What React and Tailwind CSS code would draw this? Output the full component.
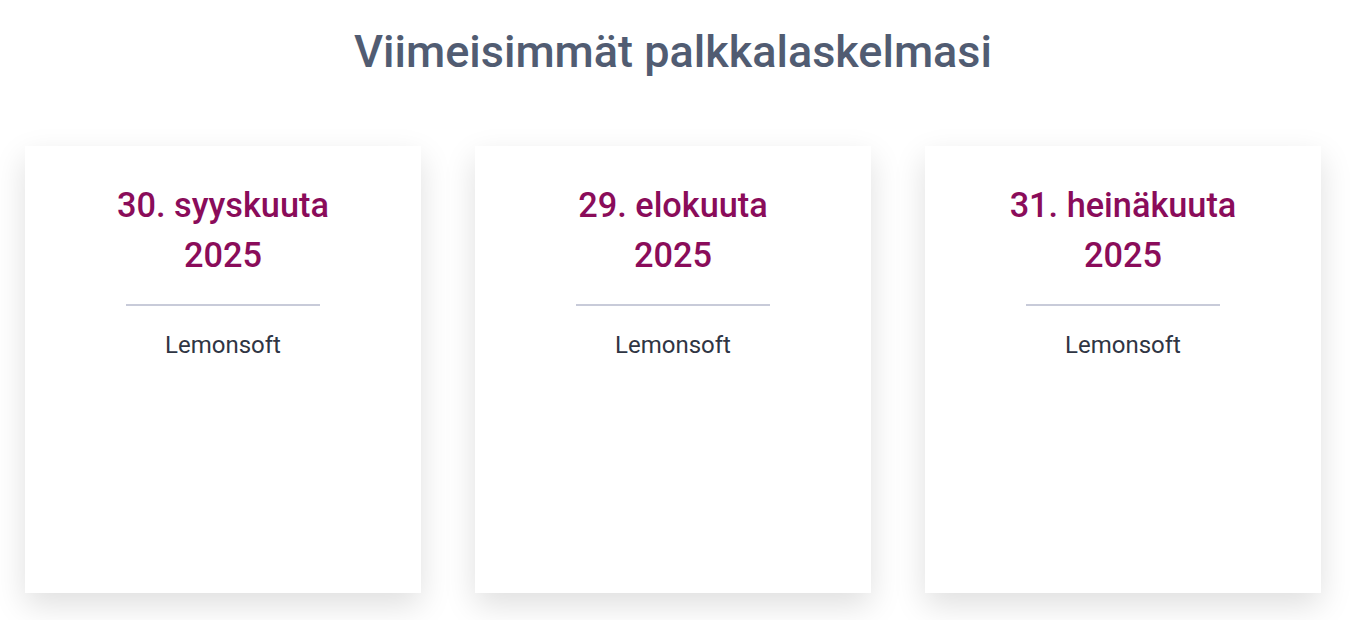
import React from 'react';

const payslips = [
  { day: '30. syyskuuta', year: '2025', company: 'Lemonsoft' },
  { day: '29. elokuuta', year: '2025', company: 'Lemonsoft' },
  { day: '31. heinäkuuta', year: '2025', company: 'Lemonsoft' },
];

const PayslipCard = ({ slip }) => (
  <div className="w-[396px] h-[447px] bg-white shadow-[0_12px_30px_rgba(0,0,0,0.13)] flex flex-col items-center pt-[34px]">
    <h2 className="text-[34.3px] leading-[50px] font-medium text-[#8a0c5a] text-center">
      {slip.day}
      <br />
      {slip.year}
    </h2>
    <div className="w-[194px] h-[2px] bg-[#c8cbd9] mt-[24px]" />
    <p className="mt-[23px] text-[24px] leading-[32px] text-[#2f3543]">{slip.company}</p>
  </div>
);

const App = () => {
  return (
    <div className="min-h-screen bg-white font-['Roboto',sans-serif] pr-[10px]">
      <h1 className="pt-[24px] text-center text-[45px] leading-[56px] font-medium text-[#515c72]">
        Viimeisimmät palkkalaskelmasi
      </h1>
      <div className="mt-[66px] pl-[25px] flex gap-[54px]">
        {payslips.map((slip, i) => (
          <PayslipCard key={i} slip={slip} />
        ))}
      </div>
    </div>
  );
};

export default App;
